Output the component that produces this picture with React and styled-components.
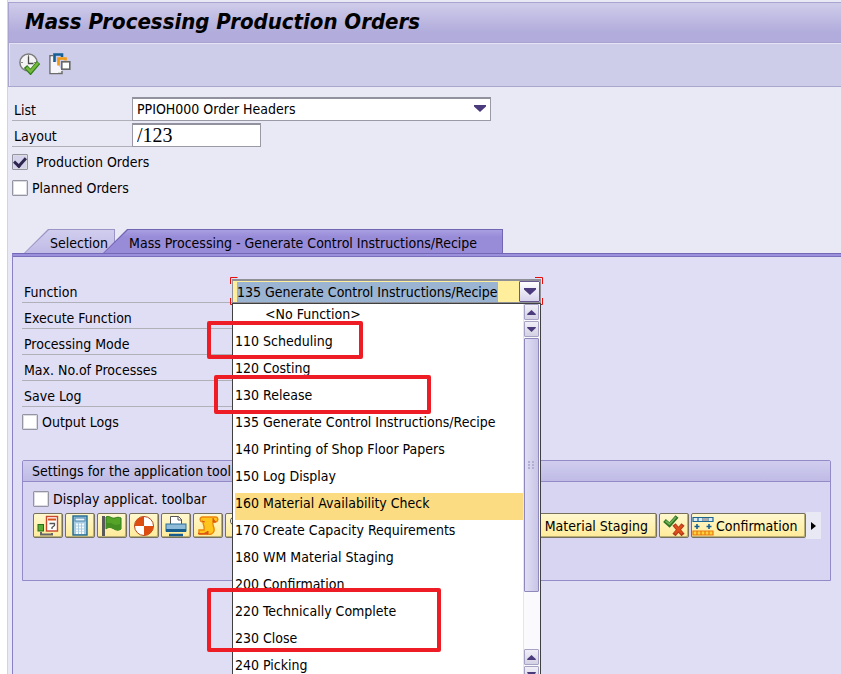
import React, { useEffect, useRef, useState } from "react";
import styled, { createGlobalStyle } from "styled-components";

const functions = [
  { key: "none", label: "<No Function>", indent: true },
  { key: "110", label: "110 Scheduling" },
  { key: "120", label: "120 Costing" },
  { key: "130", label: "130 Release" },
  { key: "135", label: "135 Generate Control Instructions/Recipe" },
  { key: "140", label: "140 Printing of Shop Floor Papers" },
  { key: "150", label: "150 Log Display" },
  { key: "160", label: "160 Material Availability Check" },
  { key: "170", label: "170 Create Capacity Requirements" },
  { key: "180", label: "180 WM Material Staging" },
  { key: "200", label: "200 Confirmation" },
  { key: "220", label: "220 Technically Complete" },
  { key: "230", label: "230 Close" },
  { key: "240", label: "240 Picking" },
];

const marks = [
  { top: 44, left: -25, width: 156, height: 38 },
  { top: 98, left: -18, width: 217, height: 39 },
  { top: 311, left: -25, width: 234, height: 64 },
];

const Triangle = ({ up, small }) => (
  <svg width={small ? 9 : 12} height={small ? 5 : 7} viewBox="0 0 12 7">
    <path d={up ? "M0 7V5.5L6 0L12 5.5V7z" : "M0 0V1.5L6 7L12 1.5V0z"} fill="#4b3a7c" />
  </svg>
);

const ExecuteIcon = () => (
  <svg width="22" height="22" viewBox="0 0 22 22" fill="none">
    <circle cx="9.5" cy="9.5" r="8.6" fill="#f4f4f4" stroke="#7c7c7c" strokeWidth="1.5" />
    <path d="M9.5 2v2M9.5 15v2M2 9.5h2M15 9.5h2" stroke="#8a8a8a" />
    <path d="M9.5 3.5v7h5" stroke="#4a4a4a" strokeWidth="1.3" />
    <path d="M6.5 13.5l5 5.5L19.5 9.5" stroke="#2f7d1c" strokeWidth="4.5" />
    <path d="M7.5 14.5l4 4L19 9.8" stroke="#74b83c" strokeWidth="2.6" />
  </svg>
);

const VariantIcon = () => (
  <svg width="22" height="22" viewBox="0 0 22 22" fill="none">
    <path d="M4 2.8H1V20.5H13V18" fill="#f7f7fb" stroke="#6c6c6c" strokeWidth="1.5" />
    <path d="M1.8 3.5H4V12H9V20H1.8z" fill="#f7f7fb" />
    <path d="M5.5 9V1.5H13V4" stroke="#155f93" strokeWidth="2.6" />
    <path d="M9.5 12.5V5.5H16.5V7.5" stroke="#f29a12" strokeWidth="2.6" />
    <rect x="12.8" y="8.8" width="8" height="7.4" fill="#fff" stroke="#686868" strokeWidth="1.6" />
  </svg>
);

const PlanIcon = () => (
  <svg width="22" height="22" viewBox="0 0 22 22" fill="none">
    <path d="M4 17v2.5h11V18" stroke="#666" strokeWidth="2" />
    <rect x="1" y="9.5" width="5.5" height="6.5" fill="#58ab35" stroke="#276e20" />
    <rect x="9.5" y="1.5" width="11" height="14.5" fill="#fff" stroke="#c9442a" strokeWidth="1.4" />
    <path d="M11 4.5h8" stroke="#d95018" strokeWidth="2" />
    <path d="M12.5 8.5h5v2l-2.5 2V14" stroke="#555" strokeWidth="1.3" />
  </svg>
);

const CalculatorIcon = () => (
  <svg width="22" height="22" viewBox="0 0 22 22" fill="none">
    <rect x="4" y="1" width="14" height="19" fill="#a8cbe2" stroke="#1d6793" strokeWidth="1.4" />
    <rect x="6" y="3" width="10" height="3" fill="#e9f4fb" stroke="#4a87ad" />
    <path d="M7 9.5h2m1 0h2m1 0h2M7 12.5h2m1 0h2m1 0h2M7 15.5h2m1 0h2m1 0h2M7 18h2m1 0h2m1 0h2" stroke="#f5fbff" strokeWidth="1.8" />
  </svg>
);

const FlagIcon = () => (
  <svg width="22" height="22" viewBox="0 0 22 22">
    <path d="M1 1h3v20H1z" fill="#5a5a5a" />
    <path d="M5 2c3-2 6 2 9 1 2-1 4-1 6 0v11c-3 2-5 1-7 0-3-2-6-2-8 0z" fill="#55a428" stroke="#2d7b1c" />
    <path d="M5 8l5 0 4 2 6-1v5c-3 2-5 1-7 0-3-2-6-2-8 0z" fill="#458f22" />
  </svg>
);

const WheelIcon = () => (
  <svg width="22" height="22" viewBox="0 0 22 22">
    <circle cx="11" cy="11" r="9.5" fill="#fff" stroke="#b44620" />
    <path d="M11 11V1.5A9.5 9.5 0 0 0 1.5 11zM11 11v9.5A9.5 9.5 0 0 0 20.5 11z" fill="#dc4d12" />
  </svg>
);

const PrinterIcon = () => (
  <svg width="22" height="22" viewBox="0 0 22 22" fill="none">
    <path d="M5.5 9V1.5h8l3 3V9" fill="#fff" stroke="#555" />
    <path d="M13 1.5V5h4" stroke="#555" />
    <rect x="1" y="9" width="20" height="7" fill="#8ebbd8" stroke="#2d7098" />
    <path d="M1 14h20v3H1z" fill="#175d8e" />
    <path d="M4 20h14" stroke="#175d8e" strokeWidth="2.5" />
  </svg>
);

const ScrollIcon = () => (
  <svg width="22" height="22" viewBox="0 0 22 22">
    <path
      d="M5 2h14c3 1 2 5-1 5h-2c-1 3 2 6 1 9-1 3-4 4-7 3H2v-4h5c1-3-1-5-1-8-3 0-4-4-1-5z"
      fill="#ffc51c"
      stroke="#ee8509"
      strokeWidth="1.4"
    />
    <path d="M1 18c4 2 8 0 10-2v3H2zM16 3v4h3M5 6l3 1" fill="#dc5416" stroke="#dc5416" />
  </svg>
);

const ClockIcon = () => (
  <svg width="22" height="22" viewBox="0 0 22 22" fill="none">
    <circle cx="6" cy="6" r="4.5" fill="#fff" stroke="#555" />
    <path d="M6 3v3h3" stroke="#555" />
  </svg>
);

const AcceptRejectIcon = () => (
  <svg width="22" height="22" viewBox="0 0 22 22" fill="none">
    <path d="M1.5 5.5l5 4.5L14 1.5" stroke="#2e7521" strokeWidth="4" />
    <path d="M2.5 6l4 3L13 2" stroke="#72ad56" strokeWidth="1.8" />
    <path d="M11 9.5l9 10.5M20 9.5L11 20" stroke="#b83b1c" strokeWidth="4.2" />
    <path d="M12 10.5l7 8M19 10.5l-7 8" stroke="#df5018" strokeWidth="2" />
  </svg>
);

const ConfirmationIcon = () => (
  <svg width="22" height="20" viewBox="0 0 22 20" fill="none">
    <path d="M1 1.5h20v4H1zM6 1.5v4M11 1.5v4M16 1.5v4" fill="#d9e9f3" stroke="#1c6593" strokeWidth="1.2" />
    <path d="M10.5 2h6v3h-6z" fill="#aaa" />
    <path d="M5 8v5M2.5 10.5h5M17 8v5M14.5 10.5h5" stroke="#155e91" strokeWidth="1.6" />
    <path d="M1 15h20v4H1zM5 15v4M9 15v4M13 15v4M17 15v4" fill="#ffd23b" stroke="#e77812" strokeWidth="1.2" />
  </svg>
);

const tools = [
  { name: "Reschedule", Icon: PlanIcon },
  { name: "Costing", Icon: CalculatorIcon },
  { name: "Release", Icon: FlagIcon },
  { name: "Control recipe", Icon: WheelIcon },
  { name: "Print", Icon: PrinterIcon },
  { name: "Log", Icon: ScrollIcon },
  { name: "Availability", Icon: ClockIcon },
];

const FunctionPicker = () => {
  const [value, setValue] = useState(functions[4].label);
  const input = useRef(null);

  useEffect(() => {
    input.current.focus();
    input.current.select();
  }, []);

  return (
    <Picker>
      <PickerField>
        <PickerInput
          id="function"
          ref={input}
          role="combobox"
          aria-expanded="true"
          aria-controls="function-list"
          value={value}
          onChange={(e) => setValue(e.target.value)}
        />
        <PickerButton type="button" aria-label="Show functions">
          <Triangle />
        </PickerButton>
      </PickerField>
      <FocusCorners width="313" height="28" viewBox="0 0 313 28">
        <path
          d="M.5 7V.5H7.500M305 .5h7.500v6.500M.5 21v6.500h7M305 27.500h7.500v-6.500"
          fill="none"
          stroke="#e80c0c"
        />
      </FocusCorners>
      <Dropdown>
        <Options id="function-list" role="listbox" aria-label="Function">
          {functions.map((item) => (
            <Option
              key={item.key}
              role="option"
              aria-selected={item.label === value}
              $indent={item.indent}
              $active={item.key === "160"}
              onClick={() => setValue(item.label)}
            >
              {item.label}
            </Option>
          ))}
        </Options>
        <ScrollBar>
          <ScrollButton type="button" aria-label="Scroll up">
            <Triangle up small />
          </ScrollButton>
          <ScrollButton type="button" aria-label="Scroll down">
            <Triangle small />
          </ScrollButton>
          <Thumb>
            <svg width="7" height="9" viewBox="0 0 7 9">
              <path d="M0 0h2v2H0zM4 0h2v2H4zM0 3h2v2H0zM4 3h2v2H4zM0 6h2v2H0zM4 6h2v2H4z" fill="#b3aed4" />
            </svg>
          </Thumb>
          <Track />
          <ScrollButton type="button" aria-label="Page up">
            <Triangle up small />
          </ScrollButton>
          <ScrollButton type="button" aria-label="Page down">
            <Triangle small />
          </ScrollButton>
        </ScrollBar>
      </Dropdown>
      {marks.map((mark) => (
        <Mark key={mark.top} $top={mark.top} $left={mark.left} $width={mark.width} $height={mark.height} />
      ))}
    </Picker>
  );
};

const App = () => {
  const [production, setProduction] = useState(true);
  const [planned, setPlanned] = useState(false);
  const [output, setOutput] = useState(false);
  const [display, setDisplay] = useState(false);

  return (
    <Page>
      <GlobalStyle />
      <TitleBar>
        <h1>Mass Processing Production Orders</h1>
      </TitleBar>
      <AppToolbar>
        <IconButton type="button" aria-label="Execute">
          <ExecuteIcon />
        </IconButton>
        <IconButton type="button" aria-label="Get variant">
          <VariantIcon />
        </IconButton>
      </AppToolbar>

      <Header>
        <Row>
          <Label htmlFor="list" $width={120}>
            List
          </Label>
          <SelectWrap>
            <Select id="list" defaultValue="PPIOH000">
              <option value="PPIOH000">PPIOH000 Order Headers</option>
            </Select>
            <Triangle />
          </SelectWrap>
        </Row>
        <Row>
          <Label htmlFor="layout" $width={120}>
            Layout
          </Label>
          <TextInput id="layout" defaultValue="/123" />
        </Row>
        <Checks>
          <CheckRow $gap={8}>
            <CheckBox type="checkbox" checked={production} onChange={() => setProduction(!production)} />
            Production Orders
          </CheckRow>
          <CheckRow $gap={4}>
            <CheckBox type="checkbox" checked={planned} onChange={() => setPlanned(!planned)} />
            Planned Orders
          </CheckRow>
        </Checks>
      </Header>

      <Tabs role="tablist">
        <Tab type="button" role="tab" aria-selected="false">
          <span>Selection</span>
        </Tab>
        <Tab type="button" role="tab" aria-selected="true" $active>
          <span>Mass Processing - Generate Control Instructions/Recipe</span>
        </Tab>
      </Tabs>

      <Panel>
        <Row>
          <Label htmlFor="function" $width={210}>
            Function
          </Label>
          <FunctionPicker />
        </Row>
        {["Execute Function", "Processing Mode", "Max. No.of Processes", "Save Log"].map((text) => (
          <Row key={text}>
            <Label as="span" $width={210}>
              {text}
            </Label>
          </Row>
        ))}
        <Checks>
          <CheckRow $gap={4}>
            <CheckBox type="checkbox" checked={output} onChange={() => setOutput(!output)} />
            Output Logs
          </CheckRow>
        </Checks>

        <Group>
          <h2>Settings for the application tool</h2>
          <GroupBody>
            <CheckRow $gap={4}>
              <CheckBox type="checkbox" checked={display} onChange={() => setDisplay(!display)} />
              Display applicat. toolbar
            </CheckRow>
            <ToolRow>
              {tools.map(({ name, Icon }) => (
                <ToolButton key={name} type="button" aria-label={name}>
                  <Icon />
                </ToolButton>
              ))}
              <ToolButton type="button" $grow>
                Material Staging
              </ToolButton>
              <ToolButton type="button" aria-label="Accept or reject">
                <AcceptRejectIcon />
              </ToolButton>
              <ToolButton type="button" $wide>
                <ConfirmationIcon />
                Confirmation
              </ToolButton>
              <MoreButton type="button" aria-label="More">
                <svg width="5" height="8" viewBox="0 0 5 8">
                  <path d="M0 0l5 4-5 4z" fill="#000" />
                </svg>
              </MoreButton>
            </ToolRow>
          </GroupBody>
        </Group>
      </Panel>
    </Page>
  );
};

const GlobalStyle = createGlobalStyle`
  * {
    box-sizing: border-box;
  }

  body {
    margin: 0;
    overflow: hidden;
    background: #fff;
    color: #000;
  }

  body, button, input, select {
    font-family: "DejaVu Sans Condensed", "DejaVu Sans", sans-serif;
    font-size: 14px;
    line-height: 20px;
  }

  button {
    padding: 0;
    color: #000;
    cursor: pointer;
  }
`;

const Page = styled.main`
  min-height: 100vh;
  margin-left: 7px;
  padding-top: 2px;
  border-left: 1px solid #d3d2ea;
  background: #e9e9f6;
  display: flex;
  flex-direction: column;
`;

const TitleBar = styled.header`
  height: 41px;
  padding: 0 0 2px 16px;
  border: solid #a9a3cf;
  border-width: 1px 0 1px 1px;
  background: linear-gradient(#cfccea, #b1acdb 75%);
  display: flex;
  align-items: center;

  h1 {
    margin: 0;
    font-size: 22px;
    line-height: 28px;
    font-weight: bold;
    font-style: italic;
    white-space: nowrap;
  }
`;

const AppToolbar = styled.div`
  height: 44px;
  padding: 0 0 2px 10px;
  border: solid #a9a7ce;
  border-width: 0 0 1px 1px;
  background: #cecde9;
  box-shadow: inset 1px 1px #e4e2f4;
  display: flex;
  align-items: center;
  gap: 8px;
`;

const IconButton = styled.button`
  width: 22px;
  height: 22px;
  border: none;
  background: none;

  svg {
    display: block;
  }
`;

const Header = styled.section`
  padding: 8px 4px 0;
`;

const Row = styled.div`
  display: flex;
  height: 26px;
`;

const Label = styled.label`
  width: ${(props) => props.$width}px;
  flex: none;
  padding: 5px 0 0 2px;
  border-bottom: 1px solid #b0b0b8;
`;

const SelectWrap = styled.div`
  position: relative;
  width: 359px;
  padding-top: 2px;

  svg {
    position: absolute;
    right: 5px;
    top: 10px;
    pointer-events: none;
  }
`;

const Select = styled.select`
  appearance: none;
  width: 100%;
  height: 24px;
  padding: 0 20px 2px 4px;
  border: 1px solid #9a9aa6;
  border-top: 2px solid #92929e;
  border-radius: 0;
  background: #fff;
  color: #000;
`;

const TextInput = styled.input`
  width: 129px;
  height: 24px;
  margin-top: 2px;
  padding: 0 4px;
  border: 1px solid #9a9aa6;
  border-top: 2px solid #92929e;
  font-family: "Liberation Serif", serif;
  font-size: 20px;
`;

const Checks = styled.div`
  padding-top: 2px;
`;

const CheckRow = styled.label`
  display: flex;
  align-items: center;
  height: 26px;
  gap: ${(props) => props.$gap}px;
`;

const CheckBox = styled.input`
  appearance: none;
  width: 16px;
  height: 16px;
  margin: 0;
  border: 1px solid #9594a2;
  border-radius: 1px;
  background: #fff;
  box-shadow: inset 0 0 0 1px #dcdbe2;
  display: grid;
  place-items: center;

  &:checked {
    background: #d5d2ec;
  }

  &:checked::before {
    content: "";
    width: 5px;
    height: 9px;
    margin-bottom: 2px;
    border: solid #2f2650;
    border-width: 0 3px 3px 0;
    transform: rotate(42deg);
  }
`;

const Tabs = styled.div`
  display: flex;
  height: 24px;
  margin-top: 28px;
  padding-left: 16px;
`;

const Tab = styled.button`
  height: 24px;
  border: none;
  padding: 0;
  margin-left: ${(props) => (props.$active ? "-12px" : "0")};
  background: ${(props) => (props.$active ? "#7265b4" : "#9a95c6")};
  clip-path: polygon(24px 0, 100% 0, 100% 100%, 0 100%);
  z-index: ${(props) => (props.$active ? 1 : 0)};

  span {
    display: block;
    height: 23px;
    margin: 1px 1px 0;
    padding: ${(props) => (props.$active ? "3px 25px 0 25px" : "3px 6px 0 25px")};
    background: ${(props) =>
      props.$active ? "linear-gradient(#a99fe2, #988cd9 30%)" : "linear-gradient(#d1cdee, #c0bbe6)"};
    clip-path: polygon(24px 0, 100% 0, 100% 100%, 0 100%);
    white-space: nowrap;
  }
`;

const Panel = styled.section`
  flex: 1;
  margin-left: 4px;
  padding: 23px 10px 0 9px;
  border-left: 1px solid #8a80c4;
  border-top: 1px solid #7468b6;
  background: #e0def5;
  box-shadow: inset 0 2px #9b90db, inset 0 3px #7a6fba;
`;

const Picker = styled.div`
  position: relative;
  width: 309px;
  padding-top: 2px;
`;

const PickerField = styled.div`
  display: flex;
  height: 24px;
  border: 1px solid #8f8f98;
  border-top: 2px solid #8f8f98;
  background: #ffef9c;
`;

const PickerInput = styled.input`
  flex: 1;
  min-width: 0;
  padding: 0 0 0 4px;
  border: none;
  outline: none;
  background: transparent;

  &::selection {
    background: rgba(154, 179, 209, 0.99);
    color: #000;
  }
`;

const PickerButton = styled.button`
  width: 21px;
  border: 1px solid #67598f;
  border-radius: 1px;
  background: linear-gradient(#fff, #d7d3ec);
  display: grid;
  place-items: center;
`;

const FocusCorners = styled.svg`
  position: absolute;
  top: 0;
  left: -2px;
  pointer-events: none;
`;

const Dropdown = styled.div`
  position: absolute;
  z-index: 2;
  top: 26px;
  left: 0;
  right: 0;
  border: 1px solid #404040;
  background: #fff;
  display: flex;
`;

const Options = styled.ul`
  flex: 1;
  margin: 0;
  padding: 0 0 0 2px;
  list-style: none;
`;

const Option = styled.li`
  height: 27px;
  padding-left: ${(props) => (props.$indent ? "30px" : "0")};
  background: ${(props) => (props.$active ? "#fcdc82" : "transparent")};
  white-space: nowrap;
  cursor: pointer;
`;

const ScrollBar = styled.div`
  width: 17px;
  padding-right: 1px;
  border-left: 1px solid #e6e5ef;
  background: #fafafc;
  display: flex;
  flex-direction: column;
  gap: 1px;
`;

const ScrollButton = styled.button`
  height: 16px;
  border: 1px solid #a6a2c6;
  border-radius: 1px;
  background: linear-gradient(#f1f0f8, #d3d1e4);
  display: grid;
  place-items: center;
`;

const Thumb = styled.div`
  height: 254px;
  border: 1px solid #8f88bd;
  border-radius: 1px;
  background: linear-gradient(90deg, #e0def5, #c9c5e6);
  display: grid;
  place-items: center;
`;

const Track = styled.div`
  flex: 1;
`;

const Mark = styled.div`
  position: absolute;
  z-index: 3;
  top: ${(props) => props.$top}px;
  left: ${(props) => props.$left}px;
  width: ${(props) => props.$width}px;
  height: ${(props) => props.$height}px;
  border: 4px solid #ee1c24;
  border-radius: 2px;
  pointer-events: none;
`;

const Group = styled.section`
  margin-top: 25px;
  border: 1px solid #938ac8;
  border-radius: 2px 2px 0 0;
  background: #d8d5f3;

  h2 {
    height: 21px;
    margin: 0;
    padding-left: 9px;
    border-bottom: 1px solid #938ac8;
    background: linear-gradient(#d0cdef, #bfbbe5);
    font-size: 14px;
    line-height: 20px;
    font-weight: normal;
  }
`;

const GroupBody = styled.div`
  padding: 4px 9px 41px 10px;
`;

const ToolRow = styled.div`
  display: flex;
  align-items: center;
  gap: 2px;
`;

const ToolButton = styled.button`
  width: ${(props) => (props.$wide ? "115px" : "30px")};
  height: 25px;
  padding: ${(props) => (props.$grow ? "0 8px 0 0" : "0")};
  flex: ${(props) => (props.$grow ? "1" : "none")};
  border: 1px solid #77715c;
  border-radius: 2px;
  background: linear-gradient(#fff8cf, #ffeb98);
  box-shadow: inset -1px -1px #b9ae76;
  display: flex;
  align-items: center;
  justify-content: ${(props) => (props.$grow ? "flex-end" : props.$wide ? "flex-start" : "center")};
  gap: 2px;
  white-space: nowrap;
`;

const MoreButton = styled.button`
  width: 15px;
  height: 27px;
  margin-left: -2px;
  border: none;
  background: #e9e9f6;
  display: grid;
  place-items: center;
`;

export default App;
